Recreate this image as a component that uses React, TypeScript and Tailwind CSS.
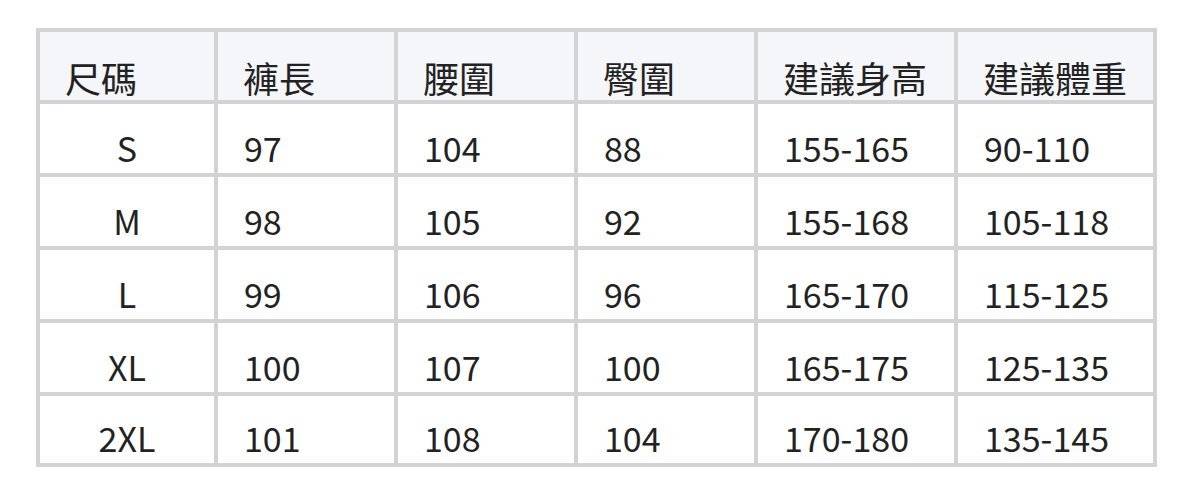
import React from "react";

const headers = ["尺碼", "褲長", "腰圍", "臀圍", "建議身高", "建議體重"];

const rows = [
  ["S", "97", "104", "88", "155-165", "90-110"],
  ["M", "98", "105", "92", "155-168", "105-118"],
  ["L", "99", "106", "96", "165-170", "115-125"],
  ["XL", "100", "107", "100", "165-175", "125-135"],
  ["2XL", "101", "108", "104", "170-180", "135-145"],
];

export default function App() {
  return (
    <div
      className="w-[1192px] h-[495px] bg-white pt-[28px] pl-[36px]"
      style={{ fontFamily: '"Noto Sans CJK TC", "Noto Sans", sans-serif' }}
    >
      <div className="w-[1121px] bg-[#d3d3d3] p-[4px] grid gap-[4px] grid-cols-[174px_176px_176px_176px_196px_195px] grid-rows-[68px_69px_69px_69px_69px_67px] text-[34px] leading-normal text-[#222222]">
        {headers.map((h) => (
          <div key={h} className="bg-[#f5f6fa] flex items-end pl-[25px] text-[36px] leading-[46px]">
            {h}
          </div>
        ))}
        {rows.map((r) =>
          r.map((c, i) => (
            <div
              key={r[0] + i}
              className={
                i === 0
                  ? "bg-white flex items-end justify-center"
                  : "bg-white flex items-end pl-[26px]"
              }
            >
              {c}
            </div>
          ))
        )}
      </div>
    </div>
  );
}
